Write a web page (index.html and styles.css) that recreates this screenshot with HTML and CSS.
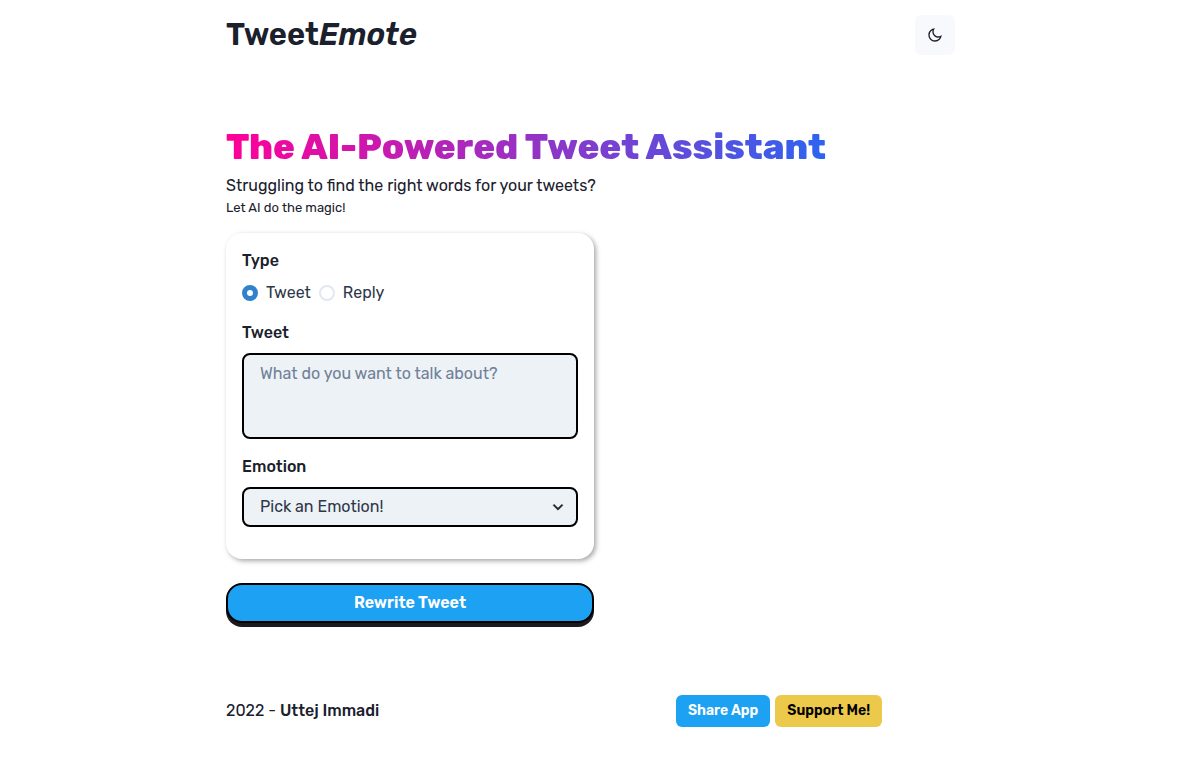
FILE: index.html
```html
<!DOCTYPE html>
<html lang="en">

<head>
    <meta charset="UTF-8">
    <meta name="viewport" content="width=device-width, initial-scale=1.0">
    <title>TweetEmote</title>
    <link rel="stylesheet" href="styles.css">
</head>

<body>
    <div class="container">
        <header class="navbar">
            <a class="logo" href="#">Tweet<em>Emote</em></a>
            <button type="button" class="theme-btn" aria-label="Toggle theme">
                <svg viewBox="0 0 24 24" width="16" height="16" fill="currentColor">
                    <path d="M10 7C10 10.866 13.134 14 17 14C18.9584 14 20.729 13.1957 21.9995 11.8995C22 11.933 22 11.9665 22 12C22 17.5228 17.5228 22 12 22C6.47715 22 2 17.5228 2 12C2 6.47715 6.47715 2 12 2C12.0335 2 12.067 2 12.1005 2.00049C10.8043 3.27098 10 5.04157 10 7ZM4 12C4 16.4183 7.58172 20 12 20C15.0583 20 17.7158 18.2839 19.062 15.7621C18.3945 15.9187 17.7035 16 17 16C12.0294 16 8 11.9706 8 7C8 6.29648 8.08133 5.60547 8.2379 4.938C5.71611 6.28423 4 8.9417 4 12Z" />
                </svg>
            </button>
        </header>

        <main>
            <h1 class="title">The AI-Powered Tweet Assistant</h1>
            <p class="subtitle">Struggling to find the right words for your tweets?</p>
            <p class="note">Let AI do the magic!</p>

            <form class="tweet-form">
                <div class="card">
                    <fieldset class="form-group">
                        <legend class="form-label">Type</legend>
                        <div class="radios">
                            <label class="radio"><input type="radio" name="type" value="tweet" checked>Tweet</label>
                            <label class="radio"><input type="radio" name="type" value="reply">Reply</label>
                        </div>
                    </fieldset>

                    <div class="form-group">
                        <label class="form-label" for="tweet">Tweet</label>
                        <textarea class="form-control" id="tweet" placeholder="What do you want to talk about?"></textarea>
                    </div>

                    <div class="form-group">
                        <label class="form-label" for="emotion">Emotion</label>
                        <div class="select-wrap">
                            <select class="form-control" id="emotion">
                                <option>Pick an Emotion!</option>
                            </select>
                            <svg class="arrow" viewBox="0 0 24 24" width="20" height="20" fill="currentColor" stroke="currentColor" stroke-width="0.4">
                                <path d="M16.59 8.59L12 13.17 7.41 8.59 6 10l6 6 6-6z" />
                            </svg>
                        </div>
                    </div>
                </div>

                <button type="submit" class="rewrite-btn">Rewrite Tweet</button>
            </form>
        </main>

        <footer class="footer">
            <p>2022 - <a class="author" href="#">Uttej Immadi</a></p>
            <div class="footer-btns">
                <button type="button" class="btn share">Share App</button>
                <button type="button" class="btn support">Support Me!</button>
            </div>
        </footer>
    </div>
</body>

</html>
```

FILE: styles.css
```css
* {
    padding: 0;
    margin: 0;
    box-sizing: border-box;
}

body {
    background: white;
    color: #1a202c;
    font-family: Rubik, Inter, sans-serif;
    font-size: 16px;
    line-height: 24px;
}

button, select, textarea {
    font: inherit;
}

a {
    color: inherit;
    text-decoration: none;
}

.container {
    max-width: 769px;
    margin: 0 auto;
    padding: 15px 20px;
}

.navbar {
    display: flex;
    justify-content: space-between;
    align-items: center;
    margin-bottom: 70px;
}

.logo {
    font-size: 31px;
    line-height: 40px;
    font-weight: 600;
}

.theme-btn {
    display: flex;
    justify-content: center;
    align-items: center;
    width: 40px;
    height: 40px;
    border: none;
    border-radius: 6px;
    color: #1a202c;
    background: #f8f9fd;
}

.title {
    width: fit-content;
    margin-bottom: 5px;
    font-size: 36px;
    line-height: 44px;
    font-weight: 800;
    color: transparent;
    background: linear-gradient(to right, #ff0099, #2d64f0);
    background-clip: text;
    -webkit-background-clip: text;
}

.note {
    font-size: 13px;
    line-height: 20px;
}

.tweet-form {
    max-width: 368px;
    margin-top: 15px;
}

.card {
    padding: 16px;
    border-radius: 16px;
    box-shadow: 2px 2px 5px rgba(0, 0, 0, 0.35);
}

.form-group {
    margin-bottom: 16px;
    border: none;
}

.form-label {
    display: block;
    margin-bottom: 8px;
    font-weight: 500;
}

.radios {
    display: flex;
    gap: 8px;
}

.radio {
    display: flex;
    align-items: center;
    gap: 8px;
    color: #2d3748;
}

.radio input {
    appearance: none;
    width: 16px;
    height: 16px;
    border: 2px solid #e2e8f0;
    border-radius: 50%;
}

.radio input:checked {
    border: 5px solid #3182ce;
}

.form-control {
    display: block;
    width: 100%;
    padding: 7px 16px;
    border: 2px solid black;
    border-radius: 8px;
    color: #2d3748;
    background: #edf2f7;
}

textarea.form-control {
    height: 86px;
    resize: none;
}

.form-control::placeholder {
    color: #718096;
}

.select-wrap {
    position: relative;
}

select.form-control {
    appearance: none;
    height: 40px;
    padding: 6px 16px;
}

.arrow {
    position: absolute;
    top: 10px;
    right: 10px;
    pointer-events: none;
}

.rewrite-btn {
    width: 100%;
    height: 40px;
    margin-top: 24px;
    border: 2px solid black;
    border-radius: 16px;
    color: white;
    background: #1da1f2;
    box-shadow: 0 4px #1a1a1f;
    font-weight: 600;
}

.footer {
    display: flex;
    justify-content: space-between;
    align-items: center;
    width: 90%;
    margin-top: 72px;
}

.author {
    font-weight: 500;
}

.footer-btns {
    display: flex;
    gap: 5px;
}

.btn {
    height: 32px;
    padding: 0 12px;
    border: none;
    border-radius: 6px;
    font-size: 14px;
    font-weight: 600;
}

.share {
    color: white;
    background: #1da1f2;
}

.support {
    color: black;
    background: #ecc94b;
}
```
